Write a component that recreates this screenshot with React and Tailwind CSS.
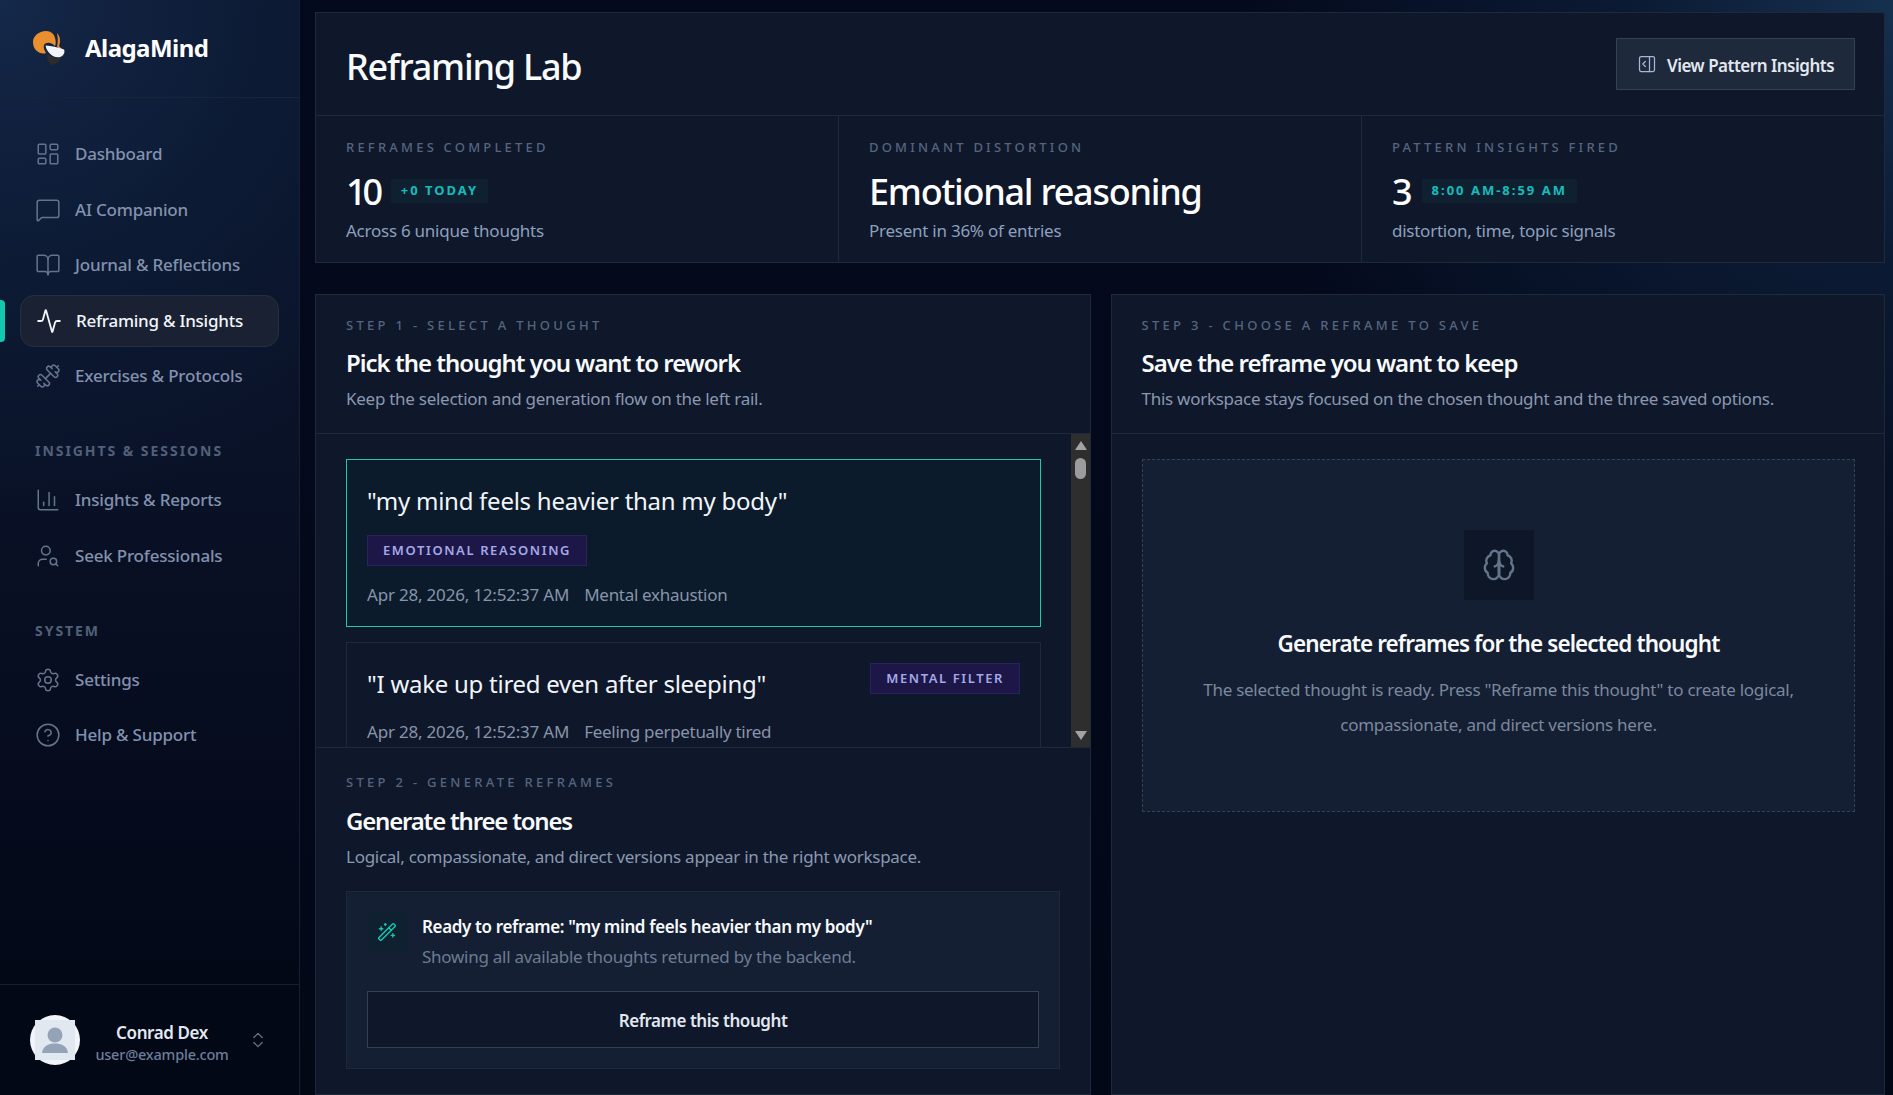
import React from "react";
import {
  LayoutDashboard, MessageSquare, BookOpen, Activity, Dumbbell, ChartColumn, UserSearch,
  Settings, CircleHelp, ChevronsUpDown, PanelRightOpen, WandSparkles,
} from "lucide-react";

function Logo() {
  return (
    <svg width="32" height="34" viewBox="0 0 32 34" className="shrink-0">
      <path d="M0 11C0 5 6 0 13 0C18 0 21 3 22 7C23 10 23 13 22 15C18 11 13 11 11 14C10 17 12 20 13 22C8 24 0 20 0 11Z" fill="#ea8f2e" />
      <path d="M24 2C27 5 28 10 26 15L29 18L31 21C28 19 26 18 24 16C25 11 25 6 24 2Z" fill="#e08a2c" />
      <path d="M12.5 14.5C18 15 25 16 31 18.5C32.5 22 30 25.5 26 26.5C20 26.5 14 22 12.5 14.5Z" fill="#f1f5f9" />
      <path d="M14 23C18 26 24 27 28 26.5C27 30 23 33 19 34C16 33 14 28 14 23Z" fill="#2f2a2c" />
    </svg>
  );
}

function BrainIcon() {
  return (
    <svg width="34" height="34" viewBox="0 0 24 24" fill="none" stroke="currentColor" strokeWidth="1.7" strokeLinecap="round" strokeLinejoin="round" className="text-[#64748b]">
      <path d="M12 5a3 3 0 1 0-5.997.125 4 4 0 0 0-2.526 5.77 4 4 0 0 0 .556 6.588A4 4 0 1 0 12 18Z" />
      <path d="M12 5a3 3 0 1 1 5.997.125 4 4 0 0 1 2.526 5.77 4 4 0 0 1-.556 6.588A4 4 0 1 1 12 18Z" />
      <path d="M15 13a4.5 4.5 0 0 1-3-4 4.5 4.5 0 0 1-3 4" />
      <path d="M12 9v9" />
    </svg>
  );
}

function NavItem({ icon: Icon, label, active }) {
  if (active) {
    return (
      <div className="relative mx-[20px] flex h-[52px] items-center gap-[14px] rounded-[14px] border border-[#262f42] bg-[#1a2133] pl-[15px] text-[17px] font-medium text-[#f1f5f9]">
        <span className="absolute left-[-21px] top-[4px] h-[42px] w-[5px] rounded-r-[4px] bg-[#14c8b0]" />
        <Icon size={26} strokeWidth={1.7} className="shrink-0 text-[#f1f5f9]" />
        <span className="tracking-[-0.25px]">{label}</span>
      </div>
    );
  }
  return (
    <div className="mx-[20px] flex h-[52px] items-center gap-[14px] pl-[15px] text-[17px] font-medium text-[#8291ad]">
      <Icon size={26} strokeWidth={1.4} className="shrink-0 text-[#64748b]" />
      <span className="tracking-[-0.2px]">{label}</span>
    </div>
  );
}

function SectionLabel({ children, className }) {
  return (
    <div className={`pl-[35px] text-[14px] font-bold leading-[20px] tracking-[1.95px] text-[#516078] ${className}`}>
      {children}
    </div>
  );
}

function Sidebar() {
  return (
    <aside className="flex h-full w-[300px] shrink-0 flex-col border-r border-[#161f33] bg-[radial-gradient(circle_at_0%_0%,#15294a_0%,#11213f_10%,#0c1a33_25%,transparent_45%),linear-gradient(180deg,#0c152d_0%,#0a1228_40%,#030817_90%)]">
      <div className="flex h-[98px] items-center gap-[20px] border-b border-[#1a2438] pb-[1px] pl-[33px]">
        <Logo />
        <span className="text-[24px] font-bold tracking-[-0.55px] text-white">AlagaMind</span>
      </div>
      <nav className="flex flex-col pt-[30px]">
        <div className="flex flex-col gap-[3.5px]">
          <NavItem icon={LayoutDashboard} label="Dashboard" />
          <NavItem icon={MessageSquare} label="AI Companion" />
          <NavItem icon={BookOpen} label="Journal & Reflections" />
          <NavItem icon={Activity} label="Reframing & Insights" active />
          <NavItem icon={Dumbbell} label="Exercises & Protocols" />
        </div>
        <SectionLabel className="mt-[39px] mb-[13px]">INSIGHTS &amp; SESSIONS</SectionLabel>
        <div className="flex flex-col gap-[3.5px]">
          <NavItem icon={ChartColumn} label="Insights & Reports" />
          <NavItem icon={UserSearch} label="Seek Professionals" />
        </div>
        <SectionLabel className="mt-[39px] mb-[13px]">SYSTEM</SectionLabel>
        <div className="flex flex-col gap-[3.5px]">
          <NavItem icon={Settings} label="Settings" />
          <NavItem icon={CircleHelp} label="Help & Support" />
        </div>
      </nav>
      <div className="mt-auto flex h-[111px] items-center border-t border-[#161f33] pl-[30px]">
        <div className="flex h-[50px] w-[50px] shrink-0 items-center justify-center rounded-full bg-[#f1f5f9]">
          <svg width="40" height="40" viewBox="0 0 40 40">
            <rect width="40" height="40" fill="#e2e8f0" />
            <circle cx="20" cy="15" r="7.5" fill="#94a3b8" />
            <path d="M7 33C8 26 13 23.5 20 23.5C27 23.5 32 26 33 33Z" fill="#94a3b8" />
          </svg>
        </div>
        <div className="ml-[15px] flex w-[134px] flex-col items-center">
          <span className="pt-[3px] text-[17px] font-semibold leading-[25px] tracking-[-0.4px] text-[#e2e8f0]">Conrad Dex</span>
          <span className="text-[14.5px] font-medium leading-[18px] tracking-[-0.2px] text-[#6d7d98]">user@example.com</span>
        </div>
        <ChevronsUpDown size={20} strokeWidth={1.5} className="ml-[19px] text-[#64748b]" />
      </div>
    </aside>
  );
}

function TealBadge({ children }) {
  return (
    <span className="mb-[2px] ml-[10px] inline-flex h-[24px] items-center bg-[#0f2130] px-[10px] text-[13px] font-bold tracking-[2px] text-[#16bcbc]">
      {children}
    </span>
  );
}

function Stat({ label, value, valueClass, badge, sub, border }) {
  return (
    <div className={`flex flex-col pl-[30px] pt-[21px] ${border ? "border-r border-[#1e293b]" : ""}`}>
      <div className="text-[13px] font-medium leading-[20px] tracking-[3.2px] text-[#55657f]">{label}</div>
      <div className="mt-[13px] flex h-[44px] items-center">
        <span className={`text-[36px] font-medium leading-[44px] text-white ${valueClass}`}>{value}</span>
        {badge ? <TealBadge>{badge}</TealBadge> : null}
      </div>
      <div className="mt-[4px] text-[17px] leading-[26px] tracking-[-0.25px] text-[#8da0bd]">{sub}</div>
    </div>
  );
}

function StepHead({ step, title, titleClass, sub, gap }) {
  return (
    <>
      <div className="text-[13px] font-medium leading-[20px] tracking-[3.3px] text-[#55657f]">{step}</div>
      <div className={`${gap} text-[24px] font-semibold leading-[36px] text-[#f8fafc] ${titleClass}`}>{title}</div>
      <div className="mt-[5px] text-[17px] leading-[26px] tracking-[-0.27px] text-[#8a98b0]">{sub}</div>
    </>
  );
}

function PurpleBadge({ children }) {
  return (
    <span className="inline-flex h-[31px] shrink-0 items-center border border-[#29225e] bg-[#1c1747] px-[15px] text-[13px] font-semibold tracking-[1.6px] text-[#a5a8e8]">
      {children}
    </span>
  );
}

function Scrollbar() {
  return (
    <div className="relative flex w-[19px] shrink-0 flex-col items-center justify-between bg-[#2e2e2e] py-[7px]">
      <span className="h-0 w-0 border-x-[6px] border-b-[9px] border-x-transparent border-b-[#a3a3a3]" />
      <span className="absolute left-[4px] top-[24px] h-[21px] w-[11px] rounded-full bg-[#9c9c9f]" />
      <span className="h-0 w-0 border-x-[6px] border-t-[9px] border-x-transparent border-t-[#a3a3a3]" />
    </div>
  );
}

function LeftPanel() {
  return (
    <section className="flex min-w-0 flex-col border border-[#1e293b] bg-[#0f172a]">
      <div className="h-[139px] border-b border-[#1e293b] px-[30px] pt-[20px]">
        <StepHead
          step="STEP 1 - SELECT A THOUGHT"
          title="Pick the thought you want to rework"
          titleClass="tracking-[-1px]"
          gap="mt-[10px]"
          sub="Keep the selection and generation flow on the left rail."
        />
      </div>
      <div className="flex h-[314px] shrink-0 overflow-hidden border-b border-[#1e293b]">
        <div className="flex min-w-0 flex-1 flex-col gap-[15px] pl-[30px] pr-[30px] pt-[25px]">
          <div className="shrink-0 border border-[#1fc7ad] bg-[#0b1b2b] px-[20px] pb-[16px] pt-[20px]">
            <div className="text-[24px] leading-[42px] tracking-[-0.26px] text-[#f1f5f9]">"my mind feels heavier than my body"</div>
            <div className="mt-[13px] flex"><PurpleBadge>EMOTIONAL REASONING</PurpleBadge></div>
            <div className="mt-[14px] flex gap-[15px] text-[17px] leading-[30px] tracking-[-0.2px] text-[#8794aa]">
              <span>Apr 28, 2026, 12:52:37 AM</span><span className="tracking-[-0.3px]">Mental exhaustion</span>
            </div>
          </div>
          <div className="shrink-0 border border-[#1e293b] px-[20px] pb-[16px] pt-[20px]">
            <div className="flex items-start justify-between">
              <div className="text-[24px] leading-[42px] tracking-[-0.26px] text-[#f1f5f9]">"I wake up tired even after sleeping"</div>
              <PurpleBadge>MENTAL FILTER</PurpleBadge>
            </div>
            <div className="mt-[12px] flex gap-[15px] text-[17px] leading-[30px] tracking-[-0.2px] text-[#8794aa]">
              <span>Apr 28, 2026, 12:52:37 AM</span><span className="tracking-[-0.3px]">Feeling perpetually tired</span>
            </div>
          </div>
        </div>
        <Scrollbar />
      </div>
      <div className="flex-1 pl-[30px] pr-[30px] pt-[24px]">
        <StepHead
          step="STEP 2 - GENERATE REFRAMES"
          title="Generate three tones"
          titleClass="tracking-[-1.2px]"
          gap="mt-[11px]"
          sub="Logical, compassionate, and direct versions appear in the right workspace."
        />
        <div className="mt-[21px] border border-[#1e293b] bg-[#141f33] p-[20px]">
          <div className="flex gap-[15px]">
            <div className="flex h-[40px] w-[40px] shrink-0 items-center justify-center bg-[#0f2130]">
              <WandSparkles size={20} strokeWidth={1.7} className="text-[#14c8b0]" />
            </div>
            <div className="pt-[1px]">
              <div className="text-[17px] font-semibold leading-[28px] tracking-[-0.36px] text-[#f8fafc]">Ready to reframe: "my mind feels heavier than my body"</div>
              <div className="mt-[2px] text-[17px] leading-[28px] tracking-[-0.27px] text-[#6d7b92]">Showing all available thoughts returned by the backend.</div>
            </div>
          </div>
          <div className="mt-[20px] flex h-[57px] items-center justify-center border border-[#334155] bg-[#0f172a] pt-[2px] text-[17px] font-semibold tracking-[-0.45px] text-[#e2e8f0]">
            Reframe this thought
          </div>
        </div>
      </div>
    </section>
  );
}

function RightPanel() {
  return (
    <section className="flex min-w-0 flex-col border border-[#1e293b] bg-[#0f172a]">
      <div className="h-[139px] border-b border-[#1e293b] pl-[29.5px] pr-[30px] pt-[20px]">
        <StepHead
          step="STEP 3 - CHOOSE A REFRAME TO SAVE"
          title="Save the reframe you want to keep"
          titleClass="tracking-[-1px]"
          gap="mt-[10px]"
          sub="This workspace stays focused on the chosen thought and the three saved options."
        />
      </div>
      <div className="pl-[30px] pr-[29px] pt-[25px]">
        <div className="flex h-[353px] flex-col items-center border border-dashed border-[#334155] bg-[#141f33] pt-[70px]">
          <div className="flex h-[70px] w-[70px] items-center justify-center bg-[#0e1727]">
            <BrainIcon />
          </div>
          <div className="mt-[26px] text-[22.5px] font-semibold leading-[36px] tracking-[-0.9px] text-[#f8fafc]">Generate reframes for the selected thought</div>
          <div className="mt-[10px] w-[620px] text-center text-[17px] leading-[35px] tracking-[-0.26px] text-[#7b889e]">
            The selected thought is ready. Press "Reframe this thought" to create logical, compassionate, and direct versions here.
          </div>
        </div>
      </div>
    </section>
  );
}

export default function App() {
  return (
    <div className="flex h-screen w-full overflow-hidden bg-[radial-gradient(circle_at_100%_0%,#15304f_0%,#0b1a33_12%,transparent_30%),linear-gradient(180deg,#040a1d_0%,#030817_100%)] font-['Noto_Sans',sans-serif]">
      <Sidebar />
      <main className="flex min-w-0 flex-1 flex-col gap-[31px] pl-[15px] pr-[8px] pt-[12px]">
        <div className="shrink-0 border border-[#1e293b] bg-[#0f172a]">
          <div className="flex h-[103px] items-center justify-between border-b border-[#1e293b] pl-[30px] pr-[29px]">
            <h1 className="pt-[6px] text-[36px] font-medium leading-[48px] tracking-[-1.25px] text-[#f8fafc]">Reframing Lab</h1>
            <button className="flex h-[52px] w-[239px] items-center justify-center gap-[10px] border border-[#334155] bg-[#1e293b] pt-[3px] text-[17px] font-semibold tracking-[-0.5px] text-[#e2e8f0]">
              <PanelRightOpen size={20} strokeWidth={1.5} className="mb-[3px] text-[#a5b8d8]" />
              View Pattern Insights
            </button>
          </div>
          <div className="grid h-[146px] grid-cols-[523px_523px_1fr]">
            <Stat label="REFRAMES COMPLETED" value="10" valueClass="mr-[2px] tracking-[-4.2px]" badge="+0 TODAY" sub="Across 6 unique thoughts" border />
            <Stat label="DOMINANT DISTORTION" value="Emotional reasoning" valueClass="tracking-[-1.25px]" sub="Present in 36% of entries" border />
            <Stat label="PATTERN INSIGHTS FIRED" value="3" valueClass="tracking-[-1px]" badge="8:00 AM-8:59 AM" sub="distortion, time, topic signals" />
          </div>
        </div>
        <div className="grid min-h-0 flex-1 grid-cols-[776px_1fr] gap-[20px]">
          <LeftPanel />
          <RightPanel />
        </div>
      </main>
    </div>
  );
}
